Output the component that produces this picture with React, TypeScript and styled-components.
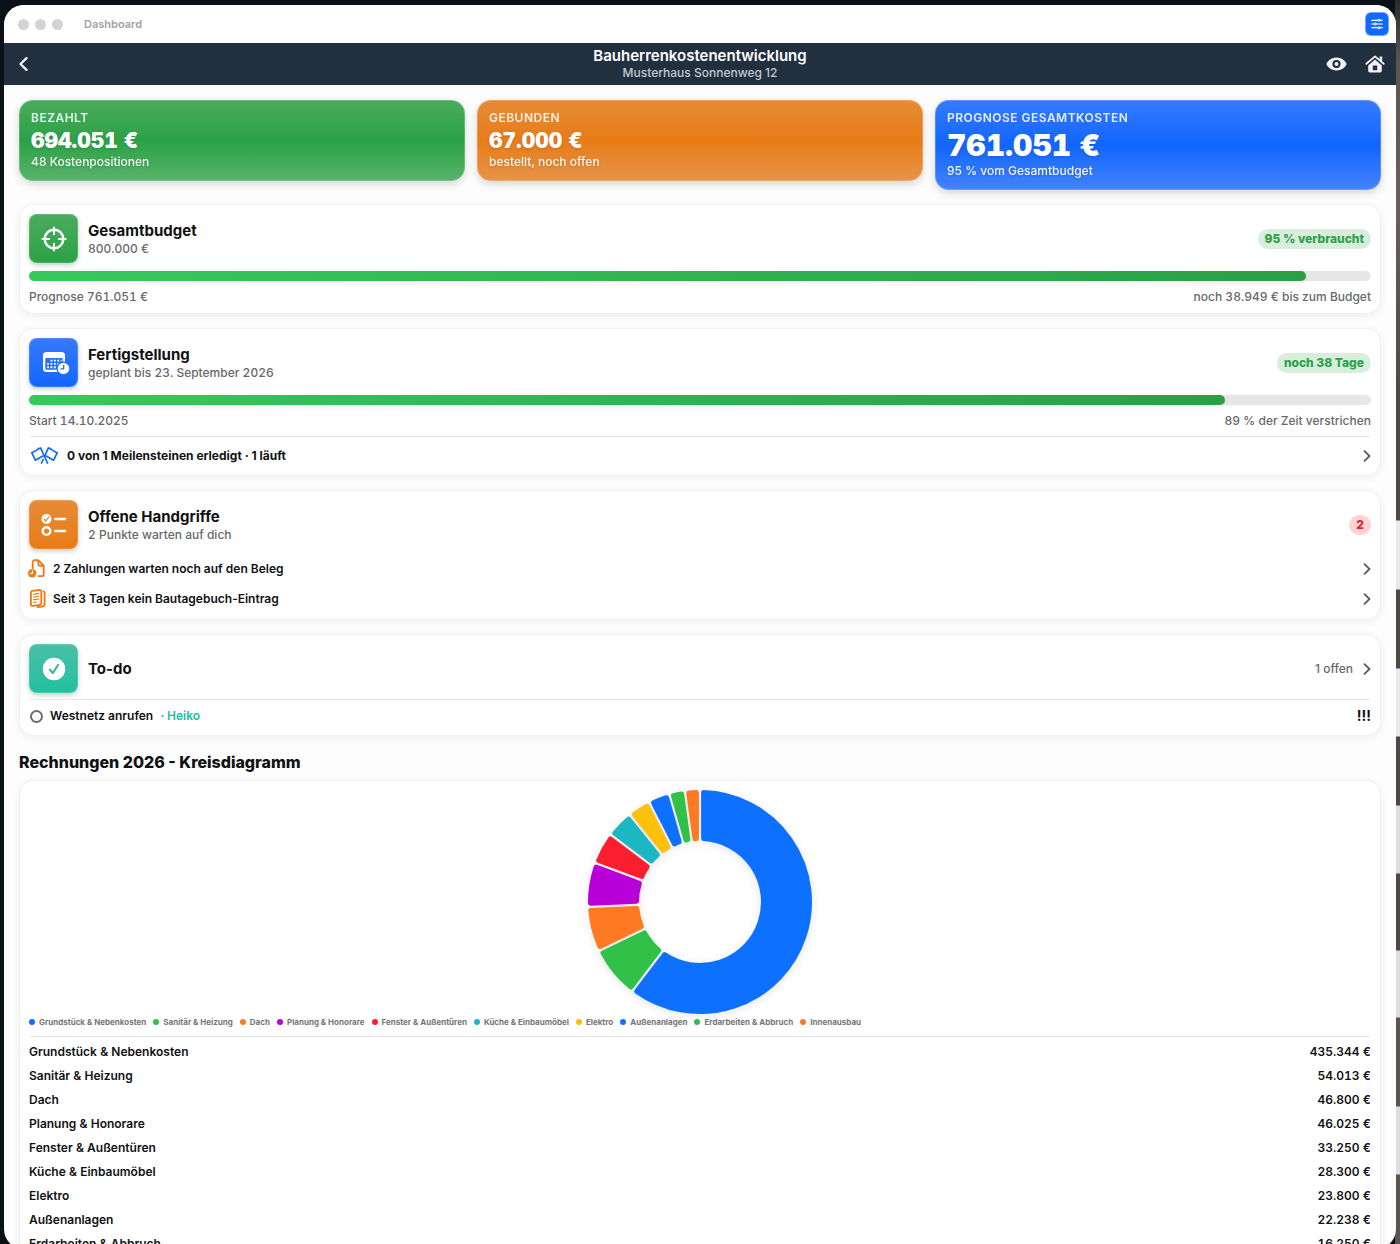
import React from "react";
import styled, { createGlobalStyle, css } from "styled-components";

const color = {
  ink: "#111113",
  muted: "#68686b",
  blue: "#1268ff",
  green: "#2ba24a",
  orange: "#e87d1a",
  teal: "#1dbf9f",
  navy: "#222f3f",
  line: "#e9e9ea",
};

const GlobalStyle = createGlobalStyle`
  *, *::before, *::after { box-sizing: border-box; }
  html, body { height: 100%; }
  body {
    margin: 0;
    overflow: hidden;
    color: ${color.ink};
    font-family: Inter, "Liberation Sans", sans-serif;
    font-size: 12px;
    line-height: 16px;
    font-weight: 500;
    background:
      linear-gradient(180deg,
        #2c2a28 0, #5c544f 60px, #6a6058 200px, #4e4743 400px, #4e4743 520px,
        #e9e9e9 521px, #e9e9e9 589px, #4e4743 590px, #4e4743 668px,
        #e9e9e9 669px, #e9e9e9 736px, #4e4743 737px, #4e4743 805px,
        #dcdcdc 806px, #dcdcdc 873px, #4e4743 874px, #4e4743 950px,
        #dcdcdc 951px, #dcdcdc 1017px, #5a5350 1018px, #5a5350 1106px,
        #dcdcdc 1107px, #dcdcdc 1174px, #5a5350 1175px) right top / 5px 100% no-repeat,
      #0b1118;
  }
  button { font: inherit; color: inherit; border: 0; background: none; padding: 0; margin: 0; cursor: pointer; }
  h1, h2, h3, p, ul { margin: 0; padding: 0; font: inherit; }
  ul { list-style: none; }
  svg { display: block; flex: none; }
`;

/* ---------- window frame ---------- */

const Window = styled.div`
  margin: 5px 4px 0;
  height: 100vh;
  display: flex;
  flex-direction: column;
  overflow: hidden;
  border-radius: 20px;
  background: #fdfdfd;
`;

const TitleBar = styled.header`
  flex: none;
  height: 38px;
  padding: 0 8px 0 14px;
  display: flex;
  align-items: center;
  background: #fff;
`;

const Lights = styled.div`
  display: flex;
  gap: 6px;
  margin-right: 21px;
`;

const Light = styled.button`
  width: 11px;
  height: 11px;
  border-radius: 50%;
  background: #d3d3d3;
`;

const WindowTitle = styled.span`
  flex: 1;
  font-size: 11px;
  font-weight: 600;
  color: #a2a2a4;
`;

const SettingsButton = styled.button`
  width: 22px;
  height: 22px;
  display: grid;
  place-items: center;
  border-radius: 5px;
  color: #fff;
  background: ${color.blue};
  box-shadow: 0 0 0 1px #6ea2ff;
`;

const NavBar = styled.nav`
  flex: none;
  height: 42px;
  padding: 0 11px;
  display: grid;
  grid-template-columns: 1fr auto 1fr;
  align-items: center;
  color: #fff;
  background: ${color.navy};
`;

const NavTitles = styled.div`
  text-align: center;
`;

const NavTitle = styled.h1`
  font-size: 15px;
  line-height: 18px;
  font-weight: 600;
`;

const NavSubtitle = styled.p`
  color: #c3c8d0;
`;

const NavActions = styled.div`
  display: flex;
  justify-content: flex-end;
  gap: 18px;
`;

const NavButton = styled.button`
  justify-self: start;
  display: grid;
  place-items: center;
  color: #f0f1fa;
`;

const Content = styled.main`
  flex: 1;
  min-height: 0;
  overflow-y: auto;
  scrollbar-width: none;
  padding: 15px;
  display: flex;
  flex-direction: column;
  gap: 14px;
  > * { flex: none; }
`;

/* ---------- summary tiles ---------- */

const Tiles = styled.section`
  display: grid;
  grid-template-columns: repeat(3, 1fr);
  gap: 12px;
  align-items: start;
`;

const tones = {
  green: ["#4bab5d", "#2ba246", "#59b26b"],
  orange: ["#e68b38", "#e87c17", "#e5944a"],
  blue: ["#367aff", "#1166ff", "#4483fa"],
  teal: ["#4abfa6", "#22c0a0", "#22bf9f"],
};
type Tone = keyof typeof tones;

const Tile = styled.article<{ $tone: Tone }>`
  padding: 9px 11px 11px;
  border: 1px solid rgba(255, 255, 255, 0.2);
  border-radius: 14px;
  color: #fff;
  background: linear-gradient(180deg, ${(p) => tones[p.$tone].join(", ")}) border-box;
  box-shadow: 0 3px 8px rgba(0, 0, 0, 0.16);
`;

const TileLabel = styled.h2`
  font-weight: 600;
  letter-spacing: 0.04em;
  opacity: 0.88;
`;

const TileValue = styled.p<{ $large?: boolean }>`
  font-size: ${(p) => (p.$large ? 30 : 21)}px;
  line-height: ${(p) => (p.$large ? 38 : 29)}px;
  font-weight: 900;
  font-variant-numeric: tabular-nums;
  text-shadow: 0 1px 3px rgba(0, 0, 0, 0.14);
`;

const TileNote = styled.p`
  line-height: 14px;
  opacity: 0.92;
  text-shadow: 0 1px 3px rgba(0, 0, 0, 0.2);
`;

/* ---------- cards ---------- */

const Card = styled.section<{ $gap?: number }>`
  padding: 9px;
  display: flex;
  flex-direction: column;
  gap: ${(p) => p.$gap ?? 8}px;
  border: 1px solid #f0f0f1;
  border-radius: 14px;
  background: #fff;
  box-shadow: 0 2px 8px rgba(0, 0, 0, 0.06);
`;

const CardHead = styled.div`
  display: flex;
  align-items: center;
  gap: 10px;
`;

const IconBox = styled.div<{ $tone: Tone }>`
  width: 49px;
  height: 49px;
  display: grid;
  place-items: center;
  border-radius: 8px;
  color: #fff;
  background: linear-gradient(180deg, ${(p) => tones[p.$tone][0]}, ${(p) => tones[p.$tone][1]});
  box-shadow: 0 2px 5px rgba(0, 0, 0, 0.22), inset 0 0 0 1px rgba(255, 255, 255, 0.14);
`;

const CardTitles = styled.div`
  flex: 1;
`;

const CardTitle = styled.h2`
  font-size: 15px;
  line-height: 20px;
  font-weight: 700;
`;

const Muted = styled.p`
  color: ${color.muted};
  font-variant-numeric: tabular-nums;
`;

const Badge = styled.span<{ $alert?: boolean }>`
  padding: 2px 7px;
  border-radius: 10px;
  font-weight: 800;
  color: ${color.green};
  background: #d9eddd;
  ${(p) =>
    p.$alert &&
    css`
      color: #e01f2d;
      background: #fdd3d3;
    `}
`;

const Track = styled.div`
  height: 10px;
  border-radius: 5px;
  background: #e7e7e7;
`;

const Fill = styled.div`
  height: 100%;
  border-radius: 5px;
  background: linear-gradient(90deg, #37c95d, #2a9f46);
  box-shadow: 0 2px 4px rgba(0, 0, 0, 0.08);
`;

const Split = styled.div`
  display: flex;
  justify-content: space-between;
  line-height: 15px;
  color: ${color.muted};
  font-variant-numeric: tabular-nums;
`;

const Divider = styled.hr`
  width: 100%;
  margin: 0;
  border: 0;
  border-top: 1px solid ${color.line};
`;

const RowList = styled.ul`
  display: grid;
  gap: 9px;
  padding-bottom: 1px;
`;

const RowButton = styled.button<{ $wide?: boolean }>`
  width: 100%;
  height: 21px;
  display: grid;
  grid-template-columns: ${(p) => (p.$wide ? 31 : 17)}px 1fr auto;
  align-items: center;
  justify-items: start;
  gap: 7px;
  font-weight: ${(p) => (p.$wide ? 700 : 600)};
  text-align: left;
`;

const RowIcon = styled.span`
  color: ${color.orange};
`;

const OpenButton = styled.button`
  display: flex;
  align-items: center;
  gap: 10px;
  color: ${color.muted};
`;

const Todo = styled.div`
  display: flex;
  align-items: center;
  height: 20px;
  font-weight: 600;
`;

const TodoLabel = styled.label`
  flex: 1;
  display: flex;
  align-items: center;
  gap: 7px;
`;

const TodoCheck = styled.input`
  appearance: none;
  width: 13px;
  height: 13px;
  margin: 0 0 0 1px;
  border: 2px solid #6d6d70;
  border-radius: 50%;
`;

const Assignee = styled.span`
  color: ${color.teal};
`;

const Priority = styled.strong`
  font-size: 14px;
  font-weight: 700;
`;

/* ---------- chart ---------- */

const ChartSection = styled.section`
  display: flex;
  flex-direction: column;
  gap: 6px;
`;

const SectionTitle = styled.h2`
  font-size: 16px;
  line-height: 24px;
  font-weight: 800;
`;

const Donut = styled.svg`
  align-self: center;
  width: 224px;
  height: 224px;
  overflow: visible;
  filter: drop-shadow(0 2px 5px rgba(0, 0, 0, 0.1));
`;

const Legend = styled.ul`
  display: flex;
  flex-wrap: wrap;
  gap: 7px;
  margin-top: -6px;
  font-size: 8px;
  line-height: 12px;
  font-weight: 700;
  color: #757578;
`;

const LegendItem = styled.li<{ $color: string }>`
  display: flex;
  align-items: center;
  gap: 4px;
  &::before {
    content: "";
    width: 6px;
    height: 6px;
    border-radius: 50%;
    background: ${(p) => p.$color};
  }
`;

const CostTable = styled.table`
  width: 100%;
  margin-top: -5px;
  border-collapse: collapse;
  font-weight: 600;
  font-variant-numeric: tabular-nums;
  th, td { height: 24px; padding: 0; text-align: left; font-weight: inherit; }
  td { text-align: right; }
`;

const costs = [
  { name: "Grundstück & Nebenkosten", value: 435344, color: "#0d70ff" },
  { name: "Sanitär & Heizung", value: 54013, color: "#31c048" },
  { name: "Dach", value: 46800, color: "#fd7a22" },
  { name: "Planung & Honorare", value: 46025, color: "#b800d8" },
  { name: "Fenster & Außentüren", value: 33250, color: "#fb1e30" },
  { name: "Küche & Einbaumöbel", value: 28300, color: "#1bb8c3" },
  { name: "Elektro", value: 23800, color: "#fec00c" },
  { name: "Außenanlagen", value: 22238, color: "#0d70ff" },
  { name: "Erdarbeiten & Abbruch", value: 16250, color: "#31c048" },
  { name: "Innenausbau", value: 15600, color: "#fd7a22" },
];

const euro = (n: number) => `${String(n).replace(/\B(?=(\d{3})+$)/g, ".")} €`;

const CORNER = 2.5;
const OUTER = 112 - CORNER;
const INNER = 61 + CORNER;
const INSET = 1.1 + CORNER;

function slicePath(start: number, end: number) {
  const at = (r: number, a: number) => `${(r * Math.sin(a)).toFixed(2)} ${(-r * Math.cos(a)).toFixed(2)}`;
  const o = Math.asin(INSET / OUTER);
  const i = Math.asin(INSET / INNER);
  const large = end - start > Math.PI ? 1 : 0;
  return `M${at(OUTER, start + o)}A${OUTER} ${OUTER} 0 ${large} 1 ${at(OUTER, end - o)}L${at(INNER, end - i)}A${INNER} ${INNER} 0 ${large} 0 ${at(INNER, start + i)}Z`;
}

function CostDonut() {
  const total = costs.reduce((sum, c) => sum + c.value, 0);
  let angle = 0;
  return (
    <Donut viewBox="-112 -112 224 224" role="img" aria-label="Rechnungen 2026">
      {costs.map((c) => {
        const start = angle;
        angle += (c.value / total) * Math.PI * 2;
        return (
          <path key={c.name} d={slicePath(start, angle)} fill={c.color} stroke={c.color} strokeWidth={CORNER * 2} strokeLinejoin="round" />
        );
      })}
    </Donut>
  );
}

/* ---------- icons ---------- */

const stroke = { fill: "none", stroke: "currentColor", strokeLinecap: "round", strokeLinejoin: "round" } as const;

const BackIcon = () => (
  <svg width="16" height="16" viewBox="0 0 16 16" {...stroke} strokeWidth="2.4"><path d="M11.500 2.200 5.500 8l6 5.800" /></svg>
);
const ChevronIcon = () => (
  <svg width="8" height="12" viewBox="0 0 8 12" {...stroke} stroke="#5c5c5f" strokeWidth="1.8"><path d="M1.500 1.200 6.500 6l-5 4.800" /></svg>
);
const SlidersIcon = () => (
  <svg width="12" height="12" viewBox="0 0 12 12" {...stroke} strokeWidth="1.200">
    <path d="M.8 2.300h10.400M.8 6h10.400M.8 9.700h10.400" />
    <circle cx="7.800" cy="2.300" r="1.100" fill={color.blue} strokeWidth="1" />
    <circle cx="4.200" cy="6" r="1.100" fill={color.blue} strokeWidth="1" />
    <circle cx="7.800" cy="9.700" r="1.100" fill={color.blue} strokeWidth="1" />
  </svg>
);
const EyeIcon = () => (
  <svg width="21" height="14" viewBox="0 0 22 14">
    <path fill="currentColor" d="M11 .2C5 .2.500 5.200.500 7S5 13.800 11 13.800 21.500 8.800 21.500 7 17 .2 11 .2Z" />
    <circle cx="11" cy="7" r="3.200" fill="none" stroke={color.navy} strokeWidth="2.200" />
  </svg>
);
const HomeIcon = () => (
  <svg width="20" height="18" viewBox="0 0 20 18">
    <path {...stroke} strokeWidth="1.800" d="M1.300 8.800 10 1.400l8.700 7.400" />
    <path fill="currentColor" d="M14.600 1.600h2.600v5l-2.600-2ZM10 4.600l6.800 5.800v5.400a1.600 1.600 0 0 1-1.600 1.600H4.800a1.600 1.600 0 0 1-1.600-1.600v-5.400Z" />
    <path fill={color.navy} d="M7.800 10.600h4.400v4.600H7.800Z" />
  </svg>
);
const TargetIcon = () => (
  <svg width="26" height="26" viewBox="0 0 26 26" {...stroke} strokeWidth="2.500">
    <circle cx="13" cy="13" r="9.300" />
    <path strokeWidth="2" d="M13 1.400v6.800M13 17.800v6.800M1.400 13h6.800M17.800 13h6.800" />
  </svg>
);
const CalendarIcon = () => (
  <svg width="28" height="24" viewBox="-2 0 28 24" overflow="visible">
    <path fill="currentColor" fillRule="evenodd" d="M4.500 1h15A3.500 3.500 0 0 1 23 4.500v13a3.500 3.500 0 0 1-3.500 3.500h-15A3.500 3.500 0 0 1 1 17.500v-13A3.500 3.500 0 0 1 4.500 1ZM4.300 7A1 1 0 0 0 3.300 8v9.200a1.500 1.500 0 0 0 1.500 1.500h14.400a1.500 1.500 0 0 0 1.500-1.500V8a1 1 0 0 0-1-1Z" />
    <path {...stroke} strokeLinecap="butt" strokeWidth="1.900" strokeDasharray="1.900 1.500" d="M8.500 9.600h11M5.100 12.900h14M5.100 16.200h9" />
    <circle cx="21.500" cy="17.500" r="7" fill="#1a6cff" />
    <circle cx="21.500" cy="17.500" r="5.800" fill="currentColor" />
    <path {...stroke} stroke="#1a6cff" strokeWidth="1.300" d="M21.700 14.300v3.500h-2.800" />
  </svg>
);
const FlagsIcon = () => (
  <svg width="31" height="18" viewBox="-2 0 31 18" {...stroke} stroke={color.blue} strokeWidth="1.700">
    <path d="M9.700 1.200 16.500 16M9.700 1.200C8 1.300 6.800 2 5.800 3 4.600 4.200 3 4.700.8 5.800L4.400 13.100C6.600 12.200 7.900 11.800 9 10.700 10.100 9.600 11.300 9 13.100 8.600" />
    <path d="M17.300 1.200 13.900 8.600M12.200 12.400 10.500 16M17.300 1.200C19 1.300 20.200 2 21.200 3 22.400 4.200 24 4.700 26.200 5.800L22.600 13.100C20.400 12.200 19.100 11.800 18 10.700 16.900 9.600 15.700 9 13.900 8.600" />
  </svg>
);
const ChecklistIcon = () => (
  <svg width="26" height="24" viewBox="0 0 26 24">
    <circle cx="5.500" cy="6" r="5" fill="currentColor" />
    <path {...stroke} stroke="#e6852b" strokeWidth="1.300" d="m3.400 6.300 1.500 1.700L7.700 4" />
    <circle cx="5.500" cy="18" r="3.800" fill="none" stroke="currentColor" strokeWidth="2.400" />
    <path {...stroke} strokeWidth="2.400" d="M14.300 6h9.800M14.300 18h9.800" />
  </svg>
);
const ReceiptIcon = () => (
  <svg width="17" height="19" viewBox="1 0 17 19" overflow="visible">
    <path {...stroke} strokeWidth="1.900" d="M4.700 9V3.200a1.900 1.900 0 0 1 1.900-1.900h3.900l5.200 5.300v8.600a1.900 1.900 0 0 1-1.900 1.900h-3.300M10.300 1.600v3.700a1.400 1.400 0 0 0 1.400 1.400h3.600" />
    <circle cx="4.200" cy="14.200" r="4.200" fill="currentColor" />
    <path {...stroke} stroke="#fff" strokeWidth="1.100" d="M4.500 11.700v2.700H2.400" />
  </svg>
);
const JournalIcon = () => (
  <svg width="17" height="19" viewBox="0 0 17 19" {...stroke} strokeWidth="1.800">
    <path d="M3.400 1.900 10.600 1a1.500 1.500 0 0 1 1.700 1.500v11.800a1.700 1.700 0 0 1-1.500 1.700l-7.200.9a1.500 1.500 0 0 1-1.700-1.500V3.600a1.700 1.700 0 0 1 1.500-1.700Z" />
    <path d="M14.600 2.300c.7.300 1 .8 1 1.500v11.400a2.300 2.300 0 0 1-2 2.300l-5 .6" />
    <path strokeWidth="1.200" d="m4.600 5.300 5-.6M4.600 8l5-.6M4.600 10.700l5-.6M4.600 13.300l2.800-.3" />
  </svg>
);
const CheckIcon = () => (
  <svg width="24" height="24" viewBox="0 0 24 24">
    <circle cx="12" cy="12" r="11.200" fill="currentColor" />
    <path {...stroke} stroke="#2bb99c" strokeWidth="2" d="m7.800 12.600 3 3.500 5.400-8.300" />
  </svg>
);

/* ---------- page ---------- */

function Progress({ label, value }: { label: string; value: number }) {
  return (
    <Track role="progressbar" aria-label={label} aria-valuenow={Math.round(value)} aria-valuemin={0} aria-valuemax={100}>
      <Fill style={{ width: `${value}%` }} />
    </Track>
  );
}

export default function App() {
  return (
    <>
      <GlobalStyle />
      <Window>
        <TitleBar>
          <Lights>
            <Light aria-label="Schließen" />
            <Light aria-label="Minimieren" />
            <Light aria-label="Vergrößern" />
          </Lights>
          <WindowTitle>Dashboard</WindowTitle>
          <SettingsButton aria-label="Einstellungen"><SlidersIcon /></SettingsButton>
        </TitleBar>
        <NavBar>
          <NavButton aria-label="Zurück"><BackIcon /></NavButton>
          <NavTitles>
            <NavTitle>Bauherrenkostenentwicklung</NavTitle>
            <NavSubtitle>Musterhaus Sonnenweg 12</NavSubtitle>
          </NavTitles>
          <NavActions>
            <NavButton aria-label="Ansicht"><EyeIcon /></NavButton>
            <NavButton aria-label="Start"><HomeIcon /></NavButton>
          </NavActions>
        </NavBar>

        <Content>
          <Tiles>
            <Tile $tone="green">
              <TileLabel>BEZAHLT</TileLabel>
              <TileValue>694.051 €</TileValue>
              <TileNote>48 Kostenpositionen</TileNote>
            </Tile>
            <Tile $tone="orange">
              <TileLabel>GEBUNDEN</TileLabel>
              <TileValue>67.000 €</TileValue>
              <TileNote>bestellt, noch offen</TileNote>
            </Tile>
            <Tile $tone="blue">
              <TileLabel>PROGNOSE GESAMTKOSTEN</TileLabel>
              <TileValue $large>761.051 €</TileValue>
              <TileNote>95 % vom Gesamtbudget</TileNote>
            </Tile>
          </Tiles>

          <Card>
            <CardHead>
              <IconBox $tone="green"><TargetIcon /></IconBox>
              <CardTitles>
                <CardTitle>Gesamtbudget</CardTitle>
                <Muted>800.000 €</Muted>
              </CardTitles>
              <Badge>95 % verbraucht</Badge>
            </CardHead>
            <Progress label="Gesamtbudget" value={95.13} />
            <Split><span>Prognose 761.051 €</span><span>noch 38.949 € bis zum Budget</span></Split>
          </Card>

          <Card>
            <CardHead>
              <IconBox $tone="blue"><CalendarIcon /></IconBox>
              <CardTitles>
                <CardTitle>Fertigstellung</CardTitle>
                <Muted>geplant bis 23. September 2026</Muted>
              </CardTitles>
              <Badge>noch 38 Tage</Badge>
            </CardHead>
            <Progress label="Fertigstellung" value={89.1} />
            <Split><span>Start 14.10.2025</span><span>89 % der Zeit verstrichen</span></Split>
            <Divider />
            <RowButton $wide><FlagsIcon /><span>0 von 1 Meilensteinen erledigt · 1 läuft</span><ChevronIcon /></RowButton>
          </Card>

          <Card $gap={9}>
            <CardHead>
              <IconBox $tone="orange"><ChecklistIcon /></IconBox>
              <CardTitles>
                <CardTitle>Offene Handgriffe</CardTitle>
                <Muted>2 Punkte warten auf dich</Muted>
              </CardTitles>
              <Badge $alert>2</Badge>
            </CardHead>
            <RowList>
              <li><RowButton><RowIcon><ReceiptIcon /></RowIcon><span>2 Zahlungen warten noch auf den Beleg</span><ChevronIcon /></RowButton></li>
              <li><RowButton><RowIcon><JournalIcon /></RowIcon><span>Seit 3 Tagen kein Bautagebuch-Eintrag</span><ChevronIcon /></RowButton></li>
            </RowList>
          </Card>

          <Card $gap={6}>
            <CardHead>
              <IconBox $tone="teal"><CheckIcon /></IconBox>
              <CardTitles><CardTitle>To-do</CardTitle></CardTitles>
              <OpenButton>1 offen<ChevronIcon /></OpenButton>
            </CardHead>
            <Divider />
            <Todo>
              <TodoLabel>
                <TodoCheck type="checkbox" />
                <span>Westnetz anrufen</span>
                <Assignee>· Heiko</Assignee>
              </TodoLabel>
              <Priority>!!!</Priority>
            </Todo>
          </Card>

          <ChartSection>
            <SectionTitle>Rechnungen 2026 - Kreisdiagramm</SectionTitle>
            <Card>
              <CostDonut />
              <Legend>
                {costs.map((c) => <LegendItem key={c.name} $color={c.color}>{c.name}</LegendItem>)}
              </Legend>
              <Divider />
              <CostTable>
                <tbody>
                  {costs.map((c) => (
                    <tr key={c.name}><th scope="row">{c.name}</th><td>{euro(c.value)}</td></tr>
                  ))}
                </tbody>
              </CostTable>
            </Card>
          </ChartSection>
        </Content>
      </Window>
    </>
  );
}
